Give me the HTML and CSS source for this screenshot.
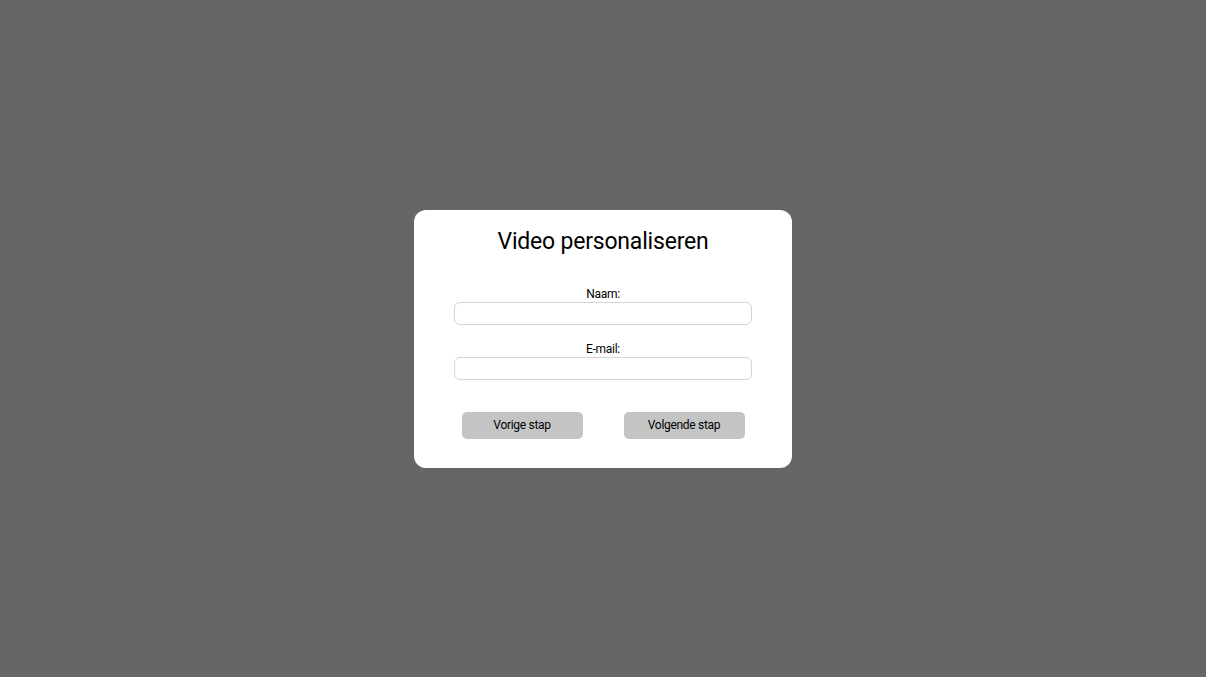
FILE: index.html
```html
<!DOCTYPE html>
<html lang="nl">
<head>
    <meta charset="UTF-8">
    <meta name="viewport" content="width=device-width, initial-scale=1.0">
    <title>Video personaliseren</title>
    <link rel="stylesheet" href="styles.css">
</head>
<body>

    <div class="modal">
        <h1>Video personaliseren</h1>

        <form class="form">
            <div class="field">
                <label for="naam">Naam:</label>
                <input type="text" id="naam">
            </div>
            <div class="field">
                <label for="email">E-mail:</label>
                <input type="email" id="email">
            </div>

            <div class="actions">
                <button type="button" class="step-btn">Vorige stap</button>
                <button type="button" class="step-btn">Volgende stap</button>
            </div>
        </form>
    </div>

</body>
</html>
```

FILE: styles.css
```css
body {
    background-color: #666666;
    font-family: Roboto, "Liberation Sans", Arial, sans-serif;
    display: flex;
    align-items: center;
    justify-content: center;
    height: 100vh;
    margin: 0;
    color: #000;
}

.modal {
    background: #ffffff;
    width: 378px;
    box-sizing: border-box;
    padding: 18px 40px 29px;
    border-radius: 12px;
    text-align: center;
}

h1 {
    margin: 0;
    font-size: 23px;
    font-weight: 400;
    line-height: 28px;
    letter-spacing: -0.2px;
}

.form {
    margin-top: 32px;
}

.field + .field {
    margin-top: 18px;
}

.field label {
    display: block;
    font-size: 12px;
    line-height: 13px;
    letter-spacing: -0.3px;
    margin-bottom: 1px;
}

.field input {
    display: block;
    width: 100%;
    height: 23px;
    box-sizing: border-box;
    border: 1px solid #d4d4d4;
    border-radius: 6px;
    background: #fff;
    margin: 0;
    padding: 0 8px;
    font-family: inherit;
    font-size: 12px;
}

.actions {
    display: flex;
    justify-content: center;
    gap: 41px;
    margin-top: 32px;
}

.step-btn {
    width: 121px;
    height: 27px;
    background: #c4c4c4;
    border: none;
    border-radius: 5px;
    font-family: inherit;
    font-size: 12px;
    letter-spacing: -0.3px;
    color: #000;
    cursor: pointer;
    padding: 0;
}
```
